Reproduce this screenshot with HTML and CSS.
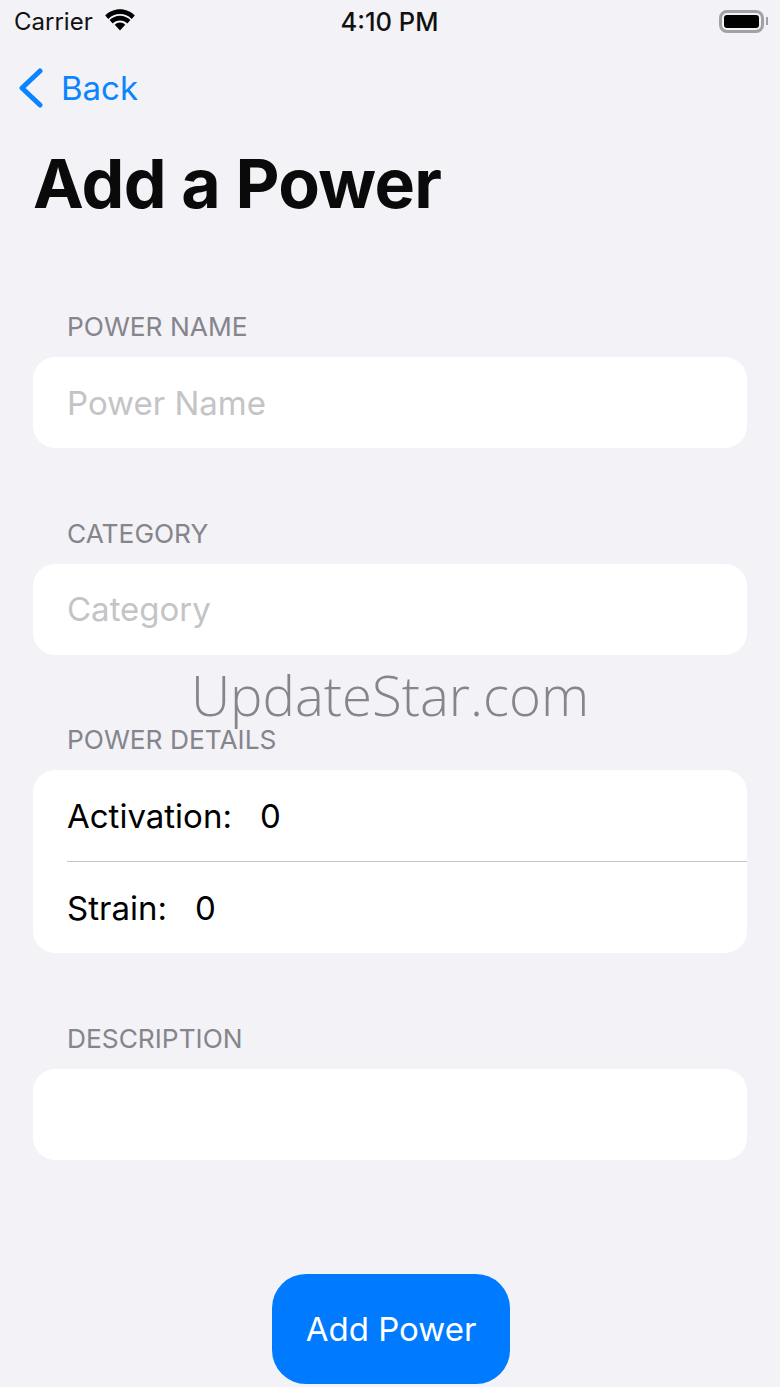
FILE: index.html
```html
<!DOCTYPE html>
<html lang="en">
<head>
  <meta charset="UTF-8" />
  <meta name="viewport" content="width=device-width, initial-scale=1.0"/>
  <title>Add a Power</title>
  <link rel="stylesheet" href="styles.css">
</head>
<body>
  <header class="status-bar">
    <div class="status-left">
      <span>Carrier</span>
      <svg class="wifi" width="34" height="24" viewBox="0 0 32 22">
        <path d="M16 4.500c4.300 0 8.200 1.700 11 4.500l2.900-3.200C26.300 2.200 21.400 0 16 0S5.700 2.200 2.100 5.800L5 9c2.800-2.800 6.700-4.500 11-4.500z" fill="#000"/>
        <path d="M16 10.500c2.700 0 5.100 1.100 6.900 2.800l2.900-3.200C23.200 7.600 19.800 6 16 6s-7.200 1.600-9.800 4.100l2.900 3.200c1.800-1.700 4.200-2.800 6.900-2.800z" fill="#000"/>
        <path d="M16 12.500c-1.900 0-3.600.7-4.900 2L16 20l4.900-5.500c-1.300-1.300-3-2-4.900-2z" fill="#000"/>
      </svg>
    </div>
    <div class="status-time">4:10 PM</div>
    <div class="status-right">
      <div class="battery"><div class="battery-fill"></div></div>
      <div class="battery-cap"></div>
    </div>
  </header>

  <nav class="nav-bar">
    <a class="back-link" href="#">
      <svg width="26" height="40" viewBox="0 0 26 40">
        <path d="M22 3 L4 20 L22 37" fill="none" stroke="#0a84ff" stroke-width="5" stroke-linecap="round" stroke-linejoin="round"/>
      </svg>
      <span>Back</span>
    </a>
  </nav>

  <h1 class="page-title">Add a Power</h1>

  <main class="form">
    <section class="group">
      <h2 class="group-label">POWER NAME</h2>
      <div class="card"><div class="row placeholder">Power Name</div></div>
    </section>
    <section class="group">
      <h2 class="group-label">CATEGORY</h2>
      <div class="card"><div class="row placeholder">Category</div></div>
    </section>
    <section class="group">
      <h2 class="group-label">POWER DETAILS</h2>
      <div class="card">
        <div class="row"><span>Activation:</span><span>0</span></div>
        <div class="divider"></div>
        <div class="row"><span>Strain:</span><span>0</span></div>
      </div>
    </section>
    <section class="group">
      <h2 class="group-label">DESCRIPTION</h2>
      <div class="card"><div class="row"></div></div>
    </section>
  </main>

  <div class="actions">
    <button class="add-button">Add Power</button>
  </div>

  <div class="watermark">UpdateStar.com</div>
</body>
</html>
```

FILE: styles.css
```css
body {
  margin: 0;
  height: 1387px;
  overflow: hidden;
  font-family: Inter, 'Liberation Sans', sans-serif;
  background: #f2f2f7;
  color: #000;
}

.status-bar {
  display: flex;
  justify-content: space-between;
  align-items: center;
  box-sizing: border-box;
  height: 44px;
  padding: 0 12px 2px 14px;
  font-size: 24px;
  color: #111;
}

.status-left {
  display: flex;
  align-items: center;
  gap: 10px;
  width: 200px;
}

.status-time {
  font-size: 25.500px;
  font-weight: 500;
}

.status-right {
  display: flex;
  align-items: center;
  justify-content: flex-end;
  gap: 2px;
  width: 203px;
}

.battery {
  width: 45px;
  height: 23px;
  padding: 2px;
  box-sizing: border-box;
  border: 3px solid #a2a2a6;
  border-radius: 8px;
}

.battery-fill {
  height: 100%;
  background: #000;
  border-radius: 3px;
}

.battery-cap {
  width: 2px;
  height: 8px;
  background: #a2a2a6;
}

.nav-bar {
  height: 88px;
  padding-left: 18px;
}

.back-link {
  display: inline-flex;
  align-items: center;
  gap: 17px;
  height: 88px;
  color: #0a84ff;
  text-decoration: none;
  font-size: 33px;
}

.page-title {
  margin: 0 0 0 33px;
  height: 105px;
  line-height: 103px;
  font-size: 68px;
  font-weight: 700;
  letter-spacing: -0.7px;
  color: #0a0a0a;
}

.form {
  display: flex;
  flex-direction: column;
  gap: 55.500px;
  padding: 0 33px;
  margin-top: 60px;
}

.group-label {
  margin: 0;
  padding-left: 34px;
  height: 60px;
  line-height: 60px;
  font-size: 26.300px;
  font-weight: 400;
  color: #85858b;
}

.card {
  background: #fff;
  border-radius: 22px;
  overflow: hidden;
}

.row {
  display: flex;
  align-items: center;
  gap: 28px;
  height: 91px;
  padding-left: 34px;
  font-size: 33px;
}

.divider {
  height: 1px;
  margin-left: 34px;
  background: #c8c8cc;
}

.placeholder {
  color: #c4c4c7;
}

.actions {
  display: flex;
  justify-content: center;
  margin-top: 114px;
  padding-left: 2px;
}

.add-button {
  width: 238px;
  height: 110px;
  border: none;
  border-radius: 34px;
  background: #007aff;
  color: #fff;
  font-family: inherit;
  font-size: 33px;
}

.watermark {
  position: absolute;
  top: 658px;
  left: 0;
  width: 780px;
  text-align: center;
  font-family: 'Open Sans', sans-serif;
  font-size: 54.500px;
  font-weight: 350;
  line-height: 75px;
  color: #85858a;
}
```
